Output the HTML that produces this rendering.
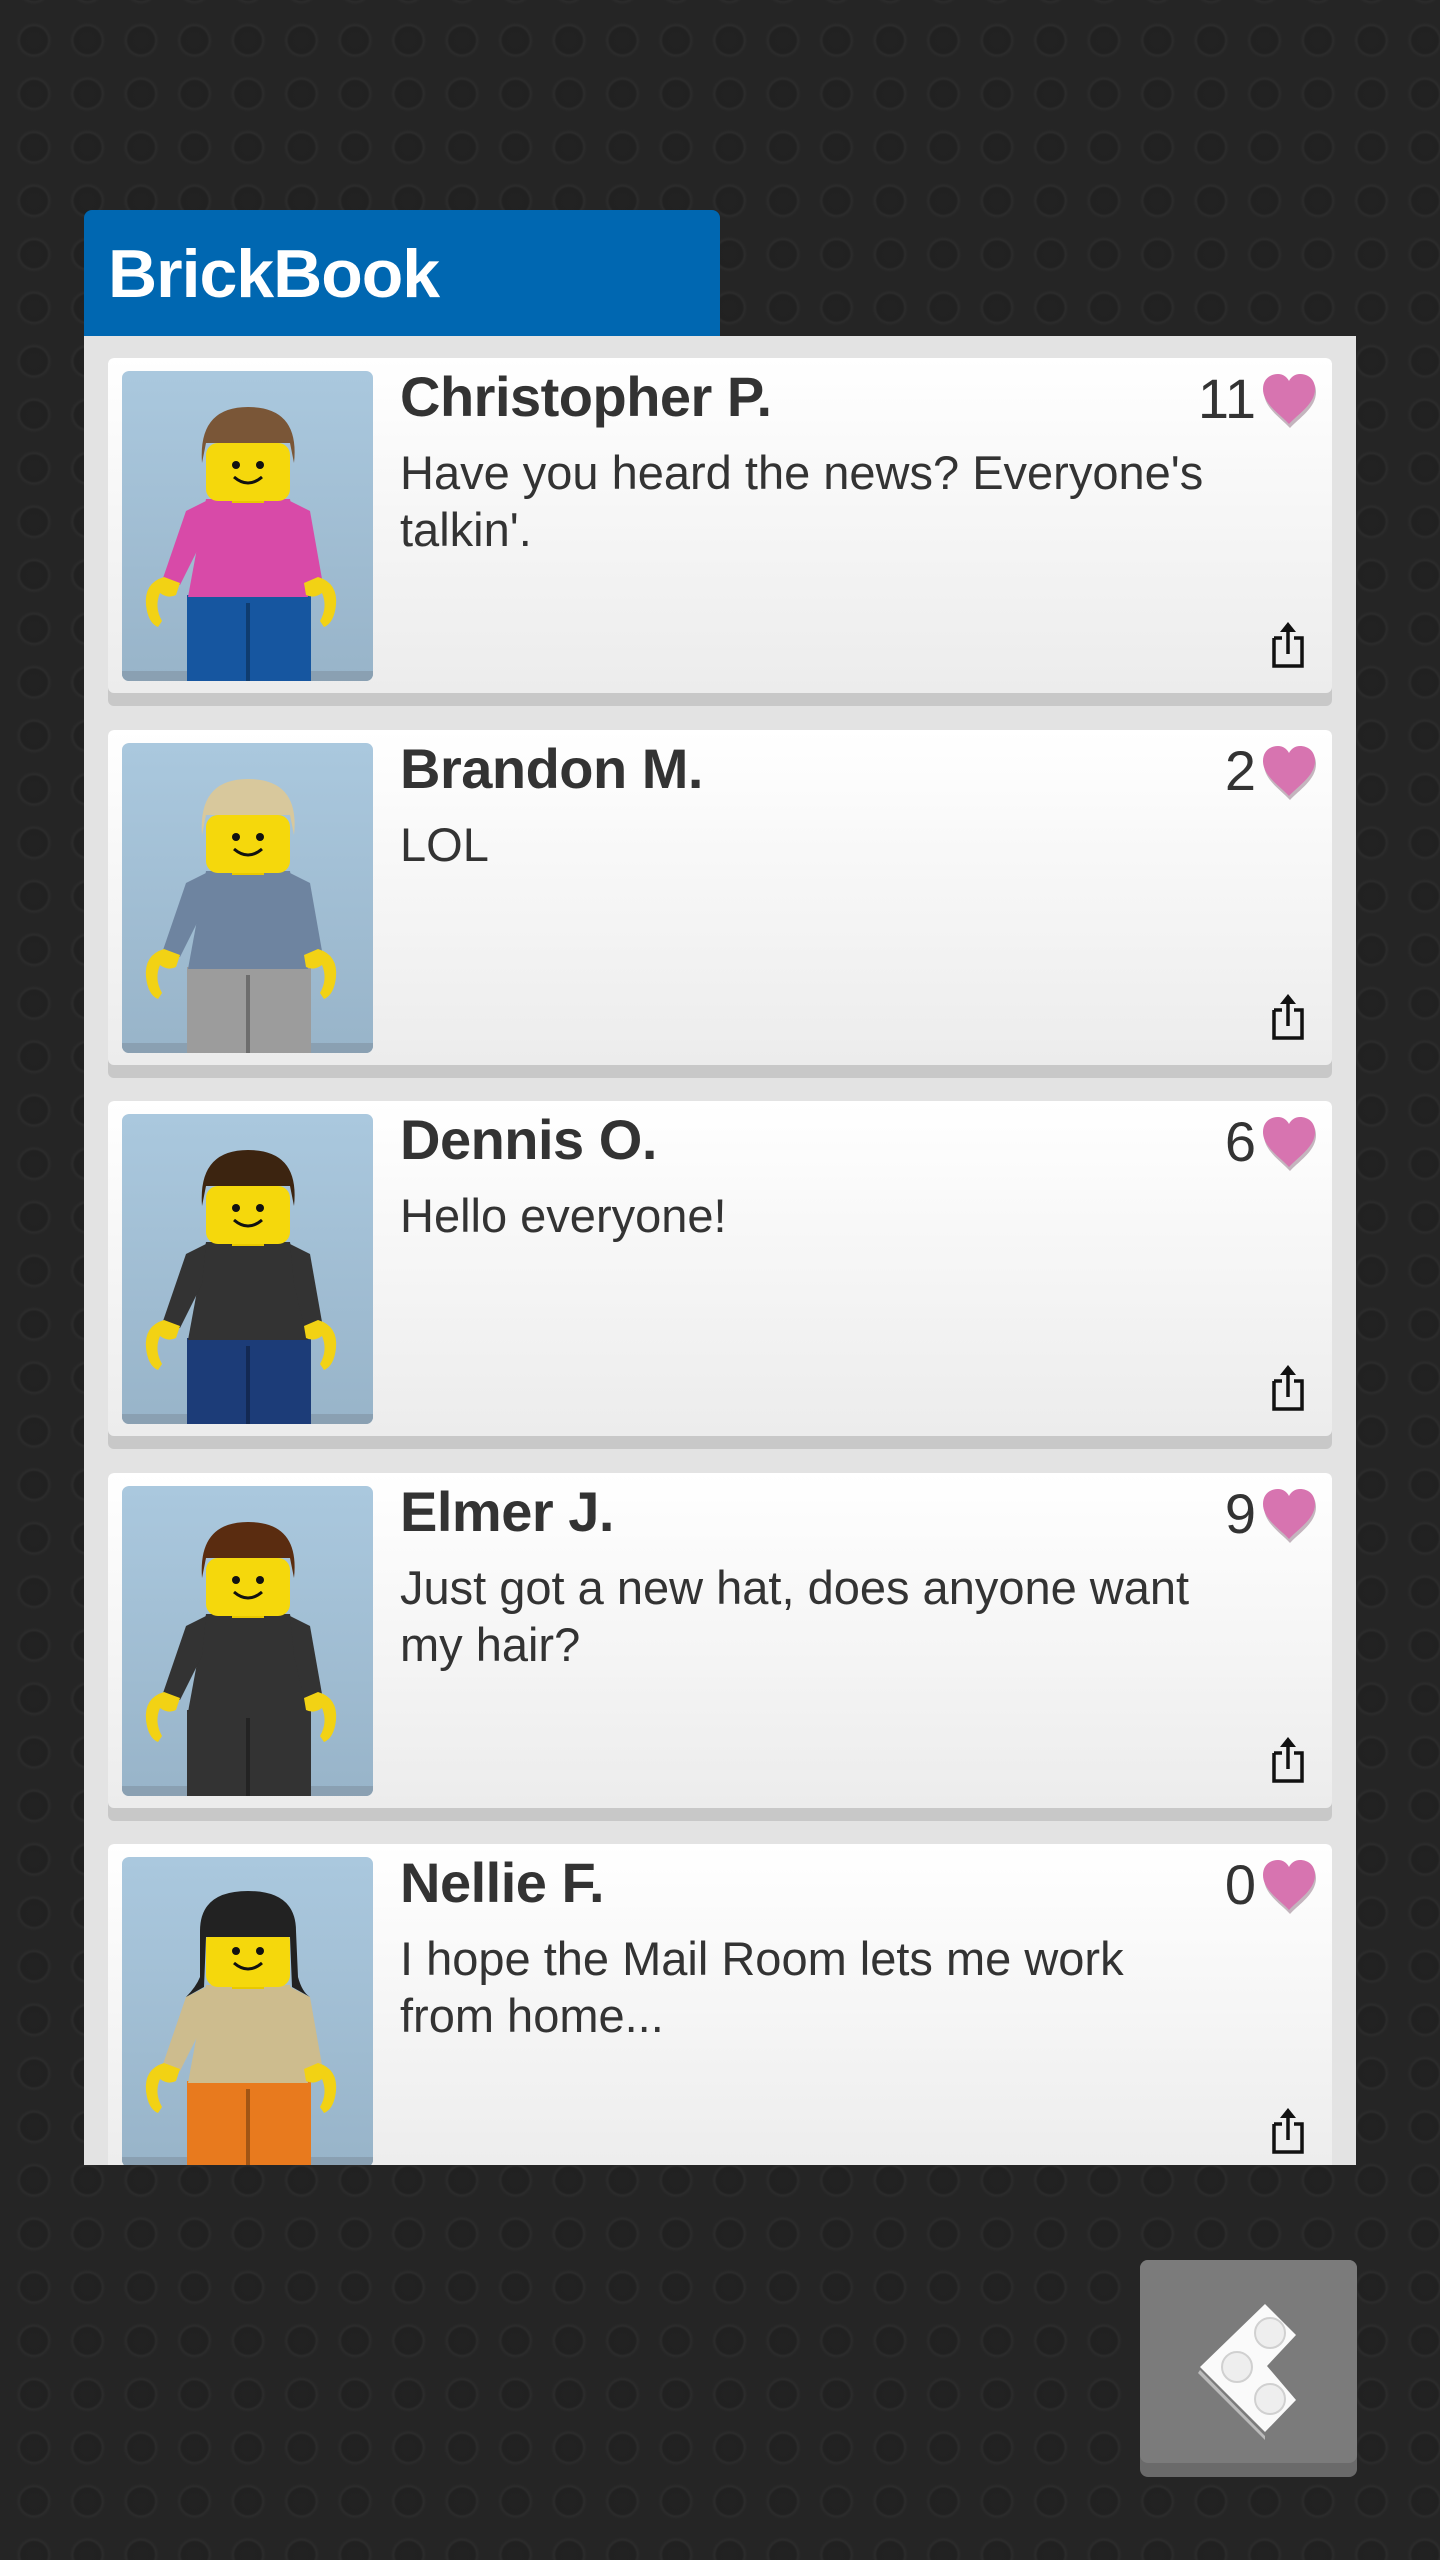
<!DOCTYPE html>
<html><head><meta charset="utf-8"><style>
*{margin:0;padding:0;box-sizing:border-box}
body{width:1440px;height:2560px;overflow:hidden;position:relative;font-family:"Liberation Sans",sans-serif;
background-color:#252525;
background-image:radial-gradient(circle at 58% 38%, #222 0, #212121 13px, #2c2c2c 15px, #272727 17px, rgba(0,0,0,0) 18px);
background-size:53.5px 53.5px;background-position:3px 20px;}
.hdr{position:absolute;left:84px;top:210px;width:636px;height:126px;background:#0067b1;border-radius:8px 8px 0 0;color:#fff;font-size:68px;font-weight:bold;padding-left:24px;line-height:128px;letter-spacing:-1px}
.panel{position:absolute;left:84px;top:336px;width:1272px;height:1829px;background:#e3e3e3;overflow:hidden}
.card{position:absolute;left:24px;width:1224px;height:348px;border-radius:6px;background:#c8c8c8}
.ci{position:absolute;left:0;top:0;width:1224px;height:335px;border-radius:6px;background:linear-gradient(#fff,#ececec)}
.av{position:absolute;left:14px;top:13px;width:251px;height:310px;border-radius:7px;overflow:hidden;background:linear-gradient(#aac8de,#98b4c9)}
.nm{position:absolute;left:292px;top:6px;font-size:56px;font-weight:bold;color:#333;letter-spacing:-0.5px}
.msg{position:absolute;left:292px;top:86px;width:830px;font-size:47px;line-height:57px;color:#333}
.cnt{position:absolute;right:76px;top:8px;font-size:56px;color:#333}
.ht{position:absolute;right:14px;top:14px;width:58px;height:56px}
.sh{position:absolute;right:24px;top:262px;width:40px;height:48px}
.btn{position:absolute;left:1140px;top:2260px;width:217px;height:217px;border-radius:8px;background:#6a6a6a}
.btn .t{position:absolute;left:0;top:0;width:217px;height:203px;border-radius:8px;background:#7b7b7b}
</style></head><body>
<div class="hdr">BrickBook</div>
<div class="panel">
<svg width="0" height="0" style="position:absolute">
<defs>
<symbol id="heart" viewBox="0 0 58 56"><path d="M29 54 C20 44 3 34 3 18 C3 8 10 2 18 2 C23 2 27 5 29 9 C31 5 35 2 40 2 C48 2 55 8 55 18 C55 34 38 44 29 54Z" fill="#8c6d80" opacity=".5" transform="translate(1,2)"/><path d="M29 52 C20 42 3 32 3 17 C3 7 10 2 18 2 C23 2 27 5 29 9 C31 5 35 2 40 2 C48 2 55 7 55 17 C55 32 38 42 29 52Z" fill="#d774b0"/></symbol>
<symbol id="share" viewBox="0 0 40 48"><path d="M6 18 H14 M26 18 H34 V46 H6 V18" fill="none" stroke="#111" stroke-width="3.5"/><path d="M20 34 V6" stroke="#111" stroke-width="3.5"/><path d="M12 12 L20 2 L28 12Z" fill="#111"/></symbol>
</defs></svg>
</div>
<script>
const data=[
["Christopher P.","11","Have you heard the news? Everyone's talkin'.","#7a5637","#d84aa8","#1656a0","m"],
["Brandon M.","2","LOL","#d8c89c","#6e84a0","#9c9c9c","m"],
["Dennis O.","6","Hello everyone!","#3c2410","#333","#1c3c78","m"],
["Elmer J.","9","Just got a new hat, does anyone want my hair?","#5a2c10","#333","#333","m"],
["Nellie F.","0","I hope the Mail Room lets me work from home...","#222","#cdbc8e","#e87a1e","f"]];
const p=document.querySelector('.panel');
data.forEach((d,i)=>{
const hair=d[6]=='f'?`<path d="M78 74 Q78 34 126 34 Q174 34 174 74 L176 120 Q180 135 188 140 L170 130 L168 80 L84 80 L82 130 L64 140 Q74 130 78 120Z" fill="${d[3]}"/>`:`<path d="M80 92 Q76 36 126 36 Q178 36 172 92 L168 72 L84 72Z" fill="${d[3]}"/>`;
const fig=`<svg width="251" height="310" viewBox="0 0 251 310">
<rect x="0" y="300" width="251" height="10" fill="#8aa0b2"/>
<rect x="65" y="224" width="124" height="90" fill="${d[5]}"/><rect x="124" y="232" width="4" height="80" fill="rgba(0,0,0,.3)"/>
<path d="M84 128 L168 128 L186 226 L66 226Z" fill="${d[4]}"/>
<path d="M84 130 L64 140 L40 210 L58 214 L80 170Z" fill="${d[4]}"/><path d="M168 130 L188 140 L200 208 L182 212 L172 170Z" fill="${d[4]}"/>
<rect x="110" y="118" width="32" height="14" fill="#e8c800"/>
<path d="M42 206 Q22 212 24 234 Q26 252 36 256 L40 250 Q32 236 38 222 Q46 228 54 224 L58 212Z" fill="#f2d214"/>
<path d="M196 206 Q216 212 214 234 Q212 252 202 256 L198 250 Q206 236 200 222 Q192 228 184 224 L182 212Z" fill="#f2d214"/>
<rect x="84" y="72" width="84" height="58" rx="12" fill="#f5d80c"/>
<circle cx="114" cy="94" r="4" fill="#111"/><circle cx="138" cy="94" r="4" fill="#111"/>
<path d="M112 106 Q126 118 140 106" fill="none" stroke="#111" stroke-width="3"/>
${hair}</svg>`;
const c=document.createElement('div');c.className='card';c.style.top=(22+i*371.5)+'px';
c.innerHTML=`<div class="ci"><div class="av">${fig}</div><div class="nm">${d[0]}</div><div class="cnt">${d[1]}</div><svg class="ht"><use href="#heart"/></svg><div class="msg">${d[2]}</div><svg class="sh"><use href="#share"/></svg></div>`;
p.appendChild(c);});
</script>
<div class="btn"><div class="t">
<svg width="217" height="203" viewBox="0 0 217 203">
<path d="M60 110 L125 176 L125 180 L58 113Z" fill="#bbb"/>
<path d="M125 44 L156 75 L127 106 L156 140 L125 172 L60 107 Z" fill="#fafafa"/>
<circle cx="130" cy="73" r="15" fill="#eee" stroke="#d0d0d0" stroke-width="2"/>
<circle cx="97" cy="107" r="15" fill="#eee" stroke="#d0d0d0" stroke-width="2"/>
<circle cx="130" cy="139" r="15" fill="#eee" stroke="#d0d0d0" stroke-width="2"/>
</svg></div></div>
</body></html>
